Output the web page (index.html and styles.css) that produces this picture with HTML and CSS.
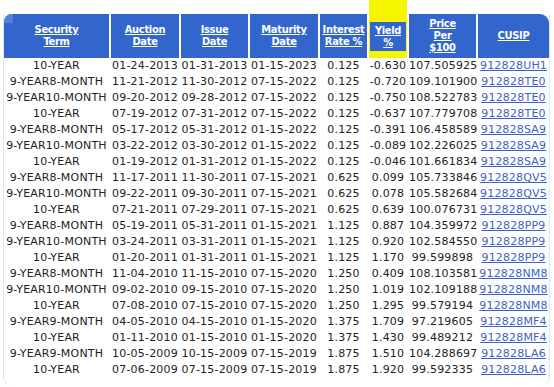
FILE: index.html
```html
<!DOCTYPE html>
<html lang="en">
<head>
    <meta charset="UTF-8">
    <title>TIPS Auction Results</title>
    <link rel="stylesheet" href="styles.css">
</head>
<body>

<!-- auction results -->
<div class="results">
<table class="auctions">
    <colgroup>
        <col class="c-term">
        <col class="c-date">
        <col class="c-date2">
        <col class="c-date">
        <col class="c-rate">
        <col class="c-yield">
        <col class="c-date2">
        <col class="c-cusip">
    </colgroup>
    <thead>
        <tr>
            <th class="first"><a href="#">Security<br>Term</a></th>
            <th><a href="#">Auction<br>Date</a></th>
            <th><a href="#">Issue<br>Date</a></th>
            <th><a href="#">Maturity<br>Date</a></th>
            <th><a href="#">Interest<br>Rate %</a></th>
            <th class="sorted"><div class="sorted-box"><a href="#">Yield<br>%</a></div></th>
            <th><a href="#">Price<br>Per<br>$100</a></th>
            <th class="last"><a href="#">CUSIP</a></th>
        </tr>
    </thead>
    <tbody>
        <tr><td>10-YEAR</td><td>01-24-2013</td><td>01-31-2013</td><td>01-15-2023</td><td>0.125</td><td>-0.630</td><td>107.505925</td><td><a href="#">912828UH1</a></td></tr>
        <tr><td>9-YEAR8-MONTH</td><td>11-21-2012</td><td>11-30-2012</td><td>07-15-2022</td><td>0.125</td><td>-0.720</td><td>109.101900</td><td><a href="#">912828TE0</a></td></tr>
        <tr><td>9-YEAR10-MONTH</td><td>09-20-2012</td><td>09-28-2012</td><td>07-15-2022</td><td>0.125</td><td>-0.750</td><td>108.522783</td><td><a href="#">912828TE0</a></td></tr>
        <tr><td>10-YEAR</td><td>07-19-2012</td><td>07-31-2012</td><td>07-15-2022</td><td>0.125</td><td>-0.637</td><td>107.779708</td><td><a href="#">912828TE0</a></td></tr>
        <tr><td>9-YEAR8-MONTH</td><td>05-17-2012</td><td>05-31-2012</td><td>01-15-2022</td><td>0.125</td><td>-0.391</td><td>106.458589</td><td><a href="#">912828SA9</a></td></tr>
        <tr><td>9-YEAR10-MONTH</td><td>03-22-2012</td><td>03-30-2012</td><td>01-15-2022</td><td>0.125</td><td>-0.089</td><td>102.226025</td><td><a href="#">912828SA9</a></td></tr>
        <tr><td>10-YEAR</td><td>01-19-2012</td><td>01-31-2012</td><td>01-15-2022</td><td>0.125</td><td>-0.046</td><td>101.661834</td><td><a href="#">912828SA9</a></td></tr>
        <tr><td>9-YEAR8-MONTH</td><td>11-17-2011</td><td>11-30-2011</td><td>07-15-2021</td><td>0.625</td><td>0.099</td><td>105.733846</td><td><a href="#">912828QV5</a></td></tr>
        <tr><td>9-YEAR10-MONTH</td><td>09-22-2011</td><td>09-30-2011</td><td>07-15-2021</td><td>0.625</td><td>0.078</td><td>105.582684</td><td><a href="#">912828QV5</a></td></tr>
        <tr><td>10-YEAR</td><td>07-21-2011</td><td>07-29-2011</td><td>07-15-2021</td><td>0.625</td><td>0.639</td><td>100.076731</td><td><a href="#">912828QV5</a></td></tr>
        <tr><td>9-YEAR8-MONTH</td><td>05-19-2011</td><td>05-31-2011</td><td>01-15-2021</td><td>1.125</td><td>0.887</td><td>104.359972</td><td><a href="#">912828PP9</a></td></tr>
        <tr><td>9-YEAR10-MONTH</td><td>03-24-2011</td><td>03-31-2011</td><td>01-15-2021</td><td>1.125</td><td>0.920</td><td>102.584550</td><td><a href="#">912828PP9</a></td></tr>
        <tr><td>10-YEAR</td><td>01-20-2011</td><td>01-31-2011</td><td>01-15-2021</td><td>1.125</td><td>1.170</td><td>99.599898</td><td><a href="#">912828PP9</a></td></tr>
        <tr><td>9-YEAR8-MONTH</td><td>11-04-2010</td><td>11-15-2010</td><td>07-15-2020</td><td>1.250</td><td>0.409</td><td>108.103581</td><td><a href="#">912828NM8</a></td></tr>
        <tr><td>9-YEAR10-MONTH</td><td>09-02-2010</td><td>09-15-2010</td><td>07-15-2020</td><td>1.250</td><td>1.019</td><td>102.109188</td><td><a href="#">912828NM8</a></td></tr>
        <tr><td>10-YEAR</td><td>07-08-2010</td><td>07-15-2010</td><td>07-15-2020</td><td>1.250</td><td>1.295</td><td>99.579194</td><td><a href="#">912828NM8</a></td></tr>
        <tr><td>9-YEAR9-MONTH</td><td>04-05-2010</td><td>04-15-2010</td><td>01-15-2020</td><td>1.375</td><td>1.709</td><td>97.219605</td><td><a href="#">912828MF4</a></td></tr>
        <tr><td>10-YEAR</td><td>01-11-2010</td><td>01-15-2010</td><td>01-15-2020</td><td>1.375</td><td>1.430</td><td>99.489212</td><td><a href="#">912828MF4</a></td></tr>
        <tr><td>9-YEAR9-MONTH</td><td>10-05-2009</td><td>10-15-2009</td><td>07-15-2019</td><td>1.875</td><td>1.510</td><td>104.288697</td><td><a href="#">912828LA6</a></td></tr>
        <tr><td>10-YEAR</td><td>07-06-2009</td><td>07-15-2009</td><td>07-15-2019</td><td>1.875</td><td>1.920</td><td>99.592335</td><td><a href="#">912828LA6</a></td></tr>
    </tbody>
</table>
</div>

</body>
</html>
```

FILE: styles.css
```css
body {
    margin: 0;
    font-family: "DejaVu Sans", Verdana, sans-serif;
    font-size: 11px;
    color: #222;
    background: #fff;
}
.results {
    width: 545px;
    margin: 14px 0 0 3px;
    padding-bottom: 8px;
    border-left: 1px solid #e6e6e6;
    border-right: 1px solid #e6e6e6;
    border-bottom-left-radius: 9px;
    border-bottom-right-radius: 9px;
}
.auctions {
    width: 549px;
    margin: 0 -2px;
    table-layout: fixed;
    border-collapse: separate;
    border-spacing: 2px 0;
}
.c-term { width: 105px; }
.c-date { width: 68px; }
.c-date2 { width: 67px; }
.c-rate { width: 47px; }
.c-yield { width: 38px; }
.c-cusip { width: 71px; }

th {
    height: 44px;
    padding: 0;
    background-color: #3366cc;
    color: #fff;
    font-family: "DejaVu Sans Condensed", "DejaVu Sans", Verdana, sans-serif;
    font-weight: bold;
    letter-spacing: -0.3px;
    line-height: 12px;
    text-align: center;
    vertical-align: middle;
}
th a {
    color: #fff;
}
th.first {
    position: relative;
    border-top-left-radius: 8px;
}
th.first::before {
    content: "";
    position: absolute;
    left: 0;
    top: 0;
    width: 9px;
    height: 9px;
    background-color: #5580d8;
    border-top-left-radius: 8px;
}
th.last {
    border-top-right-radius: 9px;
}
th.sorted {
    height: 29px;
    background-color: #f5f500;
    box-shadow: 0 -14px 0 0 #f5f500;
    padding: 8px 1px 7px;
    vertical-align: top;
}
.sorted-box {
    height: 29px;
    display: flex;
    align-items: center;
    justify-content: center;
    background-color: #3366cc;
}
td {
    height: 16px;
    padding: 0;
    line-height: 16px;
    letter-spacing: 0.2px;
    text-align: center;
    white-space: nowrap;
}
td a {
    color: #3a62c8;
}
```
